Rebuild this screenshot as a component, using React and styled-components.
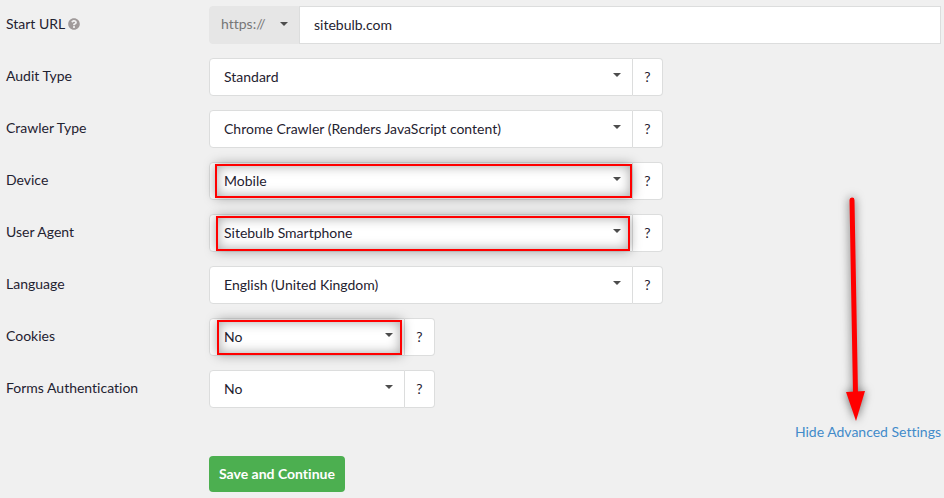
import React, { Fragment } from 'react';
import styled, { createGlobalStyle, css } from 'styled-components';
import { FaQuestionCircle } from 'react-icons/fa';

const GlobalStyle = createGlobalStyle`
  *{
    box-sizing: border-box;
  }
  body{
    margin: 0;
    background-color: #f0f0f0;
    color: #1f2230;
    font-family: Lato, "Liberation Sans", sans-serif;
    font-size: 14px;
    font-variant-ligatures: none;
    line-height: 20px;
  }
  input, select, button{
    margin: 0;
    font: inherit;
    font-variant-ligatures: none;
    color: inherit;
  }
`;

const Page = styled.main`
  position: relative;
  padding: 6px 3px 6px 6px;
`;

const Form = styled.form`
  display: flex;
  flex-direction: column;
  gap: 14px;
`;

const Row = styled.div`
  display: grid;
  grid-template-columns: 203px minmax(0, 1fr);
  align-items: start;
`;

const LabelCell = styled.div`
  display: flex;
  align-items: center;
  gap: 3px;
  padding-top: 8px;
  svg{
    color: #a09a9a;
  }
`;

const Group = styled.div`
  display: flex;
  width: 100%;
  max-width: ${props => props.$size === 'full' ? 'none' : props.$size === 'small' ? '226px' : '454px'};
  height: 38px;
`;

const SelectBox = styled.div`
  position: relative;
  display: flex;
  flex: ${props => props.$prefix ? '0 0 90px' : '1'};
`;

const Select = styled.select`
  appearance: none;
  width: 100%;
  padding: 0 32px 1px 14px;
  border: 1px solid #dcdddd;
  border-radius: 4px 0 0 4px;
  background-color: #fff;
  outline: none;
  ${props => props.$prefix && css`
    padding: 0 20px 2px 11px;
    border-color: #e6e6e6;
    background-color: #e6e6e6;
    color: #777;
  `}
`;

const Caret = styled.svg`
  position: absolute;
  top: ${props => props.$prefix ? '16px' : '15px'};
  right: ${props => props.$prefix ? '11px' : '12px'};
  width: 8px;
  height: 4px;
  fill: #4d4d4d;
  pointer-events: none;
`;

const TextInput = styled.input`
  flex: 1;
  min-width: 0;
  padding: 0 14px 1px;
  border: 1px solid #dcdddd;
  background-color: #fff;
  outline: none;
`;

const HelpButton = styled.button`
  flex: 0 0 30px;
  padding: 0;
  border: 1px solid #dcdddd;
  border-left: 0;
  border-radius: 0 4px 4px 0;
  background-color: #fff;
`;

// red frame drawn over a select
const Highlight = styled.div`
  position: absolute;
  z-index: 1;
  inset: ${props => props.$inset};
  border: 2px solid #f00;
  box-shadow: 0 0 12px rgba(0, 0, 0, 0.35), inset 0 0 12px rgba(0, 0, 0, 0.35);
  pointer-events: none;
`;

const LinkRow = styled.div`
  display: flex;
  justify-content: flex-end;
  a{
    color: #428bca;
    text-decoration: none;
  }
`;

const SaveButton = styled.button`
  grid-column: 2;
  justify-self: start;
  height: 36px;
  padding: 0 10px;
  border: 0;
  border-radius: 4px;
  background-color: #4caf50;
  color: #fff;
  font-weight: bold;
`;

const Arrow = styled.svg`
  position: absolute;
  top: 186px;
  right: 68px;
  width: 40px;
  height: 244px;
  overflow: visible;
  filter: drop-shadow(0 0 5px rgba(0, 0, 0, 0.6));
  pointer-events: none;
`;

const fields = [
  { id: 'audit-type', label: 'Audit Type', value: 'Standard' },
  { id: 'crawler-type', label: 'Crawler Type', value: 'Chrome Crawler (Renders JavaScript content)' },
  { id: 'device', label: 'Device', value: 'Mobile', highlight: '2px 1px 2px 6px' },
  { id: 'user-agent', label: 'User Agent', value: 'Sitebulb Smartphone', highlight: '2px 3px 1px 7px' },
  { id: 'language', label: 'Language', value: 'English (United Kingdom)' },
  { id: 'cookies', label: 'Cookies', value: 'No', size: 'small', highlight: '2px 3px 1px 8px' },
  { id: 'forms-auth', label: 'Forms Authentication', value: 'No', size: 'small' },
];

const SelectField = ({ id, value, prefix, highlight, ...rest }) => (
  <SelectBox $prefix={prefix}>
    <Select id={id} $prefix={prefix} defaultValue={value} {...rest}>
      <option>{value}</option>
    </Select>
    <Caret $prefix={prefix} viewBox="0 0 8 4" aria-hidden="true">
      <path d="M0 0h8L4 4z" />
    </Caret>
    {highlight && <Highlight $inset={highlight} />}
  </SelectBox>
);

const App = () => (
  <Fragment>
    <GlobalStyle />
    <Page>
      <Form onSubmit={e => e.preventDefault()}>
        <Row>
          <LabelCell>
            <label htmlFor="start-url">Start URL</label>
            <FaQuestionCircle size={12} />
          </LabelCell>
          <Group $size="full">
            <SelectField id="protocol" value="https://" prefix aria-label="Protocol" />
            <TextInput id="start-url" type="text" defaultValue="sitebulb.com" />
          </Group>
        </Row>
        {fields.map(field => (
          <Row key={field.id}>
            <LabelCell>
              <label htmlFor={field.id}>{field.label}</label>
            </LabelCell>
            <Group $size={field.size}>
              <SelectField id={field.id} value={field.value} highlight={field.highlight} />
              <HelpButton type="button" aria-label={`${field.label} help`}>?</HelpButton>
            </Group>
          </Row>
        ))}
        <LinkRow>
          <a href="#">Hide Advanced Settings</a>
        </LinkRow>
        <Row>
          <SaveButton type="submit">Save and Continue</SaveButton>
        </Row>
      </Form>
      <Arrow viewBox="0 0 40 244" aria-hidden="true">
        <path d="M16 14L19.5 208" stroke="#f00" strokeWidth="5" strokeLinecap="round" />
        <path d="M10 206L29 205L20 235z" fill="#f00" />
      </Arrow>
    </Page>
  </Fragment>
);

export default App;
